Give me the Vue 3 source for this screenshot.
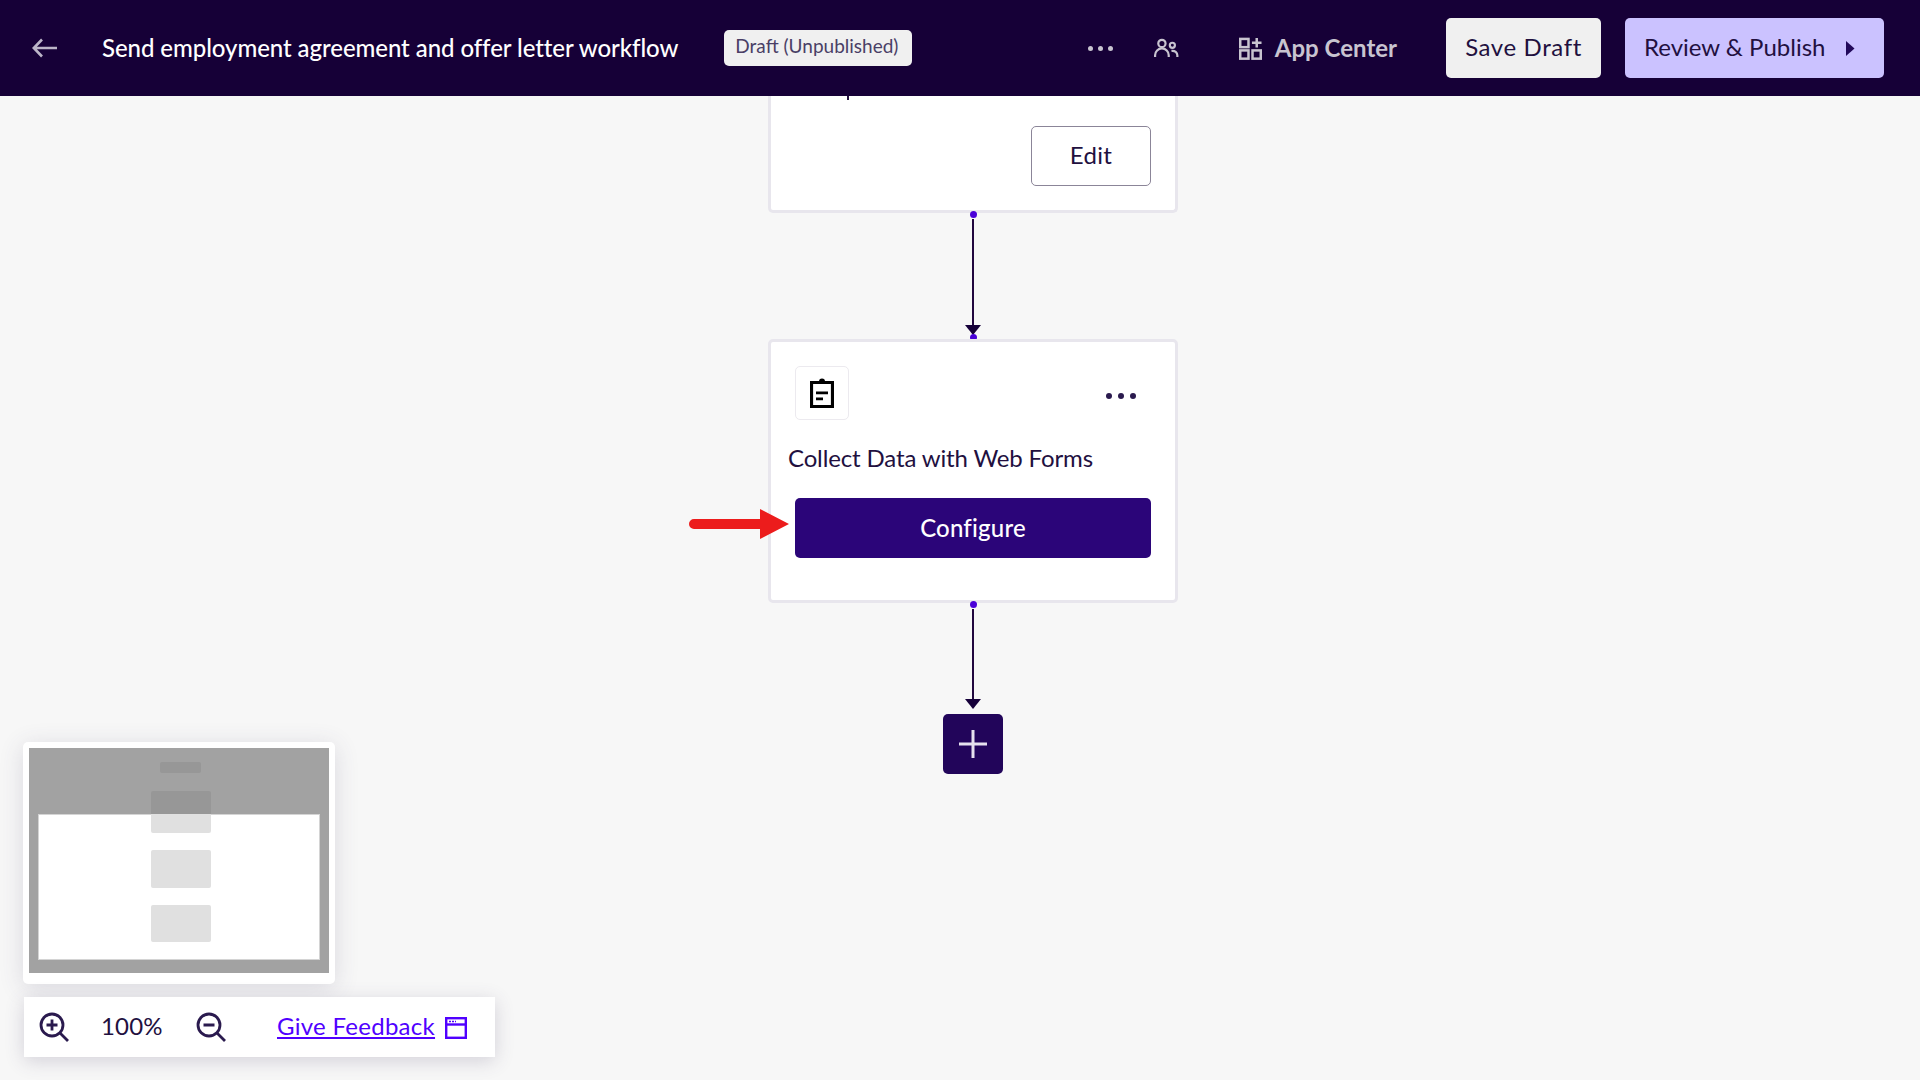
<template>
  <div class="page">
    <!-- top bar -->
    <header class="topbar">
      <button class="back" aria-label="Back">
        <svg width="26" height="20" viewBox="0 0 26 20" fill="none" stroke="#bcb5c8" stroke-width="2.6">
          <path d="M25 10H2M10 1.500L1.800 10L10 18.500" />
        </svg>
      </button>
      <h1 class="title">Send employment agreement and offer letter workflow</h1>
      <span class="badge">Draft (Unpublished)</span>
      <div class="spacer"></div>
      <div class="more-dots"><i></i><i></i><i></i></div>
      <svg class="people" width="26" height="20" viewBox="0 0 28 22" fill="none" stroke="#c8c4d0" stroke-width="2.400">
        <circle cx="9.500" cy="6" r="4" />
        <path d="M2 21v-2a7 7 0 0 1 15 0v2" />
        <circle cx="21" cy="8" r="2.800" />
        <path d="M20 14.200c3.800-.6 6.500 1.800 6.500 5V21" />
      </svg>
      <div class="app-center">
        <svg width="23" height="23" viewBox="0 0 24 24" fill="none" stroke="#c8c4d0" stroke-width="2.600">
          <rect x="1.300" y="2" width="8.600" height="8.600" />
          <rect x="1.300" y="14" width="8.600" height="8.600" />
          <rect x="14.100" y="14" width="8.600" height="8.600" />
          <path d="M18.500 1v10M13.500 6h10" />
        </svg>
        <span class="app-label">App Center</span>
      </div>
      <button class="save">Save Draft</button>
      <button class="publish">
        <span>Review &amp; Publish</span>
        <svg width="9" height="15" viewBox="0 0 9 15"><path d="M0 0l8.500 7.500L0 15z" fill="#22095a" /></svg>
      </button>
    </header>

    <!-- workflow diagram -->
    <main class="canvas">
      <div class="flow">
        <section class="card card-cut">
          <i class="tick"></i>
          <button class="edit">Edit</button>
        </section>

        <div class="link link-first">
          <i class="port port-top"></i>
          <i class="line"></i>
          <i class="head"></i>
          <i class="port port-bottom"></i>
        </div>

        <section class="card card-step">
          <div class="step-top">
            <div class="step-icon">
              <svg width="24" height="30" viewBox="0 0 24 30" fill="none">
                <path d="M1.500 4.500h21v24h-21z" stroke="#000" stroke-width="3.200" />
                <path d="M6 5h12V3.500h-3a3 3 0 0 0-6 0H6z" fill="#000" />
                <path d="M6 14.800h12M6 20.800h7" stroke="#000" stroke-width="2.700" />
              </svg>
            </div>
            <div class="step-dots"><i></i><i></i><i></i></div>
          </div>
          <p class="step-name">Collect Data with Web Forms</p>
          <button class="configure">Configure</button>
          <svg class="red-arrow" width="100" height="30" viewBox="0 0 100 30">
            <path d="M5 10h66V0l29 15-29 15V20H5a5 5 0 0 1 0-10z" fill="#ec1c1c" />
          </svg>
        </section>

        <div class="link link-second">
          <i class="port port-top"></i>
          <i class="line"></i>
          <i class="head"></i>
        </div>

        <button class="add" aria-label="Add step">
          <svg width="28" height="28" viewBox="0 0 28 28" stroke="#e6e1ee" stroke-width="3">
            <path d="M14 0v28M0 14h28" />
          </svg>
        </button>
      </div>

      <!-- minimap and zoom controls -->
      <aside class="minimap">
        <div class="map">
          <div class="map-view"></div>
          <i class="map-node map-label"></i>
          <i class="map-node map-a"></i>
          <i class="map-node map-b"></i>
          <i class="map-node map-c"></i>
        </div>
      </aside>
      <div class="zoombar">
        <svg class="zoom-in" width="30" height="30" viewBox="0 0 30 30" fill="none" stroke="#2a1a4e" stroke-width="2.800">
          <circle cx="13" cy="13" r="11" />
          <path d="M21 21l8 8M7.500 13h11M13 7.500v11" />
        </svg>
        <span class="percent">100%</span>
        <svg class="zoom-out" width="30" height="30" viewBox="0 0 30 30" fill="none" stroke="#2a1a4e" stroke-width="2.800">
          <circle cx="13" cy="13" r="11" />
          <path d="M21 21l8 8M7.500 13h11" />
        </svg>
        <a class="feedback" href="#">Give Feedback</a>
        <svg class="window" width="22" height="22" viewBox="0 0 22 22" fill="none" stroke="#5000ff" stroke-width="2.400">
          <rect x="1.200" y="1.200" width="19.600" height="19.600" />
          <path d="M1 7.500h20" />
          <path d="M4 4.400h7" stroke-width="1.500" stroke-dasharray="2 1" />
        </svg>
      </div>
    </main>
  </div>
</template>

<script setup>
</script>

<style>
html,
body {
  margin: 0;
  background: #f7f7f7;
}
</style>

<style scoped>
.page {
  width: 1920px;
  height: 1080px;
  display: flex;
  flex-direction: column;
  overflow: hidden;
  font-family: Lato, "Liberation Sans", sans-serif;
  color: #22103f;
}

button {
  font-family: inherit;
  cursor: pointer;
}

.topbar {
  height: 96px;
  flex: none;
  display: flex;
  align-items: center;
  background: #160037;
  padding-left: 32px;
  padding-right: 36px;
}

.back {
  display: flex;
  padding: 0;
  background: none;
  border: none;
}

.title {
  margin: 0 0 2px 44px;
  font-size: 24px;
  font-weight: 500;
  letter-spacing: -0.07px;
  color: #fff;
  white-space: nowrap;
}

.badge {
  margin-left: 46px;
  margin-top: -1px;
  box-sizing: border-box;
  width: 188px;
  height: 36px;
  padding-left: 11px;
  line-height: 32px;
  background: #f0f0f0;
  border-radius: 5px;
  color: #4a3f66;
  font-size: 19px;
  white-space: nowrap;
}

.spacer {
  flex: 1;
}

.more-dots {
  display: flex;
  gap: 5px;
}

.more-dots i {
  width: 5px;
  height: 5px;
  border-radius: 50%;
  background: #c8c4d0;
}

.people {
  margin-left: 40px;
}

.app-center {
  display: flex;
  align-items: center;
  gap: 13px;
  margin-left: 60px;
  color: #c8c4d0;
  font-size: 24px;
  font-weight: 700;
}

.app-label {
  margin-bottom: 2px;
}

.save,
.publish {
  height: 60px;
  border: none;
  border-radius: 5px;
  font-size: 24px;
  color: #22103f;
}

.save {
  width: 155px;
  margin-left: 49px;
  padding: 0 0 3px;
  letter-spacing: 0.6px;
  background: #f0f0f0;
}

.publish {
  width: 259px;
  margin-left: 24px;
  padding: 0 29px 0 19px;
  background: #cbc2ff;
  display: flex;
  align-items: center;
  justify-content: space-between;
}

.publish span {
  margin-bottom: 3px;
}

.canvas {
  position: relative;
  flex: 1;
}

.flow {
  width: 410px;
  margin-left: 768px;
  display: flex;
  flex-direction: column;
}

.card {
  box-sizing: border-box;
  position: relative;
  background: #fff;
  border: 3px solid #e8e6ed;
  border-radius: 5px;
}

.card-cut {
  height: 117px;
  border-top: none;
  border-top-left-radius: 0;
  border-top-right-radius: 0;
  display: flex;
  justify-content: flex-end;
  padding: 30px 24px 0 0;
}

.tick {
  position: absolute;
  left: 76px;
  top: 0;
  width: 2px;
  height: 4px;
  background: #22103f;
}

.edit {
  width: 120px;
  height: 60px;
  padding: 0 0 3px;
  background: #fff;
  border: 1px solid #8b8598;
  border-radius: 5px;
  font-size: 24px;
  letter-spacing: 0.3px;
  color: #22103f;
}

.link {
  position: relative;
}

.link-first {
  height: 126px;
}

.link-second {
  height: 111px;
}

.port {
  position: absolute;
  left: 202px;
  width: 7px;
  height: 7px;
  border-radius: 50%;
  background: #4a00d8;
}

.port-top {
  top: -2px;
}

.port-bottom {
  bottom: -2px;
}

.line {
  position: absolute;
  left: 204px;
  top: 6px;
  width: 2px;
  background: #22083f;
}

.link-first .line {
  height: 106px;
}

.link-second .line {
  height: 91px;
}

.head {
  position: absolute;
  left: 197px;
  width: 0;
  height: 0;
  border-left: 8px solid transparent;
  border-right: 8px solid transparent;
  border-top: 10px solid #16003a;
}

.link-first .head {
  top: 112px;
}

.link-second .head {
  top: 96px;
}

.card-step {
  height: 264px;
  padding: 24px 24px 0 24px;
}

.step-top {
  display: flex;
  align-items: center;
  justify-content: space-between;
}

.step-icon {
  box-sizing: border-box;
  width: 54px;
  height: 54px;
  display: flex;
  align-items: center;
  justify-content: center;
  background: #fff;
  border: 1px solid #eceaef;
  border-radius: 5px;
}

.step-dots {
  display: flex;
  gap: 6px;
  margin-right: 15px;
  margin-top: 6px;
}

.step-dots i {
  width: 6px;
  height: 6px;
  border-radius: 50%;
  background: #2a1a4e;
}

.step-name {
  margin: 20px 0 22px -7px;
  font-size: 24px;
  line-height: 36px;
  letter-spacing: -0.14px;
  white-space: nowrap;
}

.configure {
  width: 356px;
  height: 60px;
  display: block;
  padding: 0 0 2px;
  background: #2b0579;
  border: none;
  border-radius: 5px;
  color: #fff;
  font-size: 24px;
  font-weight: 500;
  letter-spacing: 0.2px;
}

.red-arrow {
  position: absolute;
  left: -82px;
  top: 167px;
}

.add {
  width: 60px;
  height: 60px;
  margin-left: 175px;
  display: flex;
  align-items: center;
  justify-content: center;
  padding: 0;
  background: #22055a;
  border: none;
  border-radius: 5px;
}

.minimap {
  position: absolute;
  left: 23px;
  top: 646px;
  box-sizing: border-box;
  width: 312px;
  height: 242px;
  padding: 6px;
  background: #fff;
  border-radius: 5px;
  box-shadow: 0 4px 24px rgba(70, 60, 100, 0.16);
}

.map {
  position: relative;
  height: 225px;
  background: #a2a2a2;
}

.map-view {
  position: absolute;
  left: 9px;
  top: 66px;
  box-sizing: border-box;
  width: 282px;
  height: 146px;
  background: #fff;
  border: 1px solid #d4d4d4;
}

.map-node {
  position: absolute;
  left: 122px;
  width: 60px;
  border-radius: 2px;
}

.map-label {
  left: 131px;
  top: 14px;
  width: 41px;
  height: 11px;
  background: #979797;
}

.map-a {
  top: 43px;
  height: 42px;
  background: linear-gradient(#979797 0 23px, #e0e0e0 23px);
}

.map-b {
  top: 102px;
  height: 38px;
  background: #e0e0e0;
}

.map-c {
  top: 157px;
  height: 37px;
  background: #e0e0e0;
}

.zoombar {
  position: absolute;
  left: 24px;
  top: 901px;
  width: 471px;
  height: 60px;
  display: flex;
  align-items: center;
  background: #fff;
  box-shadow: 0 4px 18px rgba(70, 60, 100, 0.2);
}

.zoom-in {
  margin-left: 15px;
}

.percent {
  margin-left: 32px;
  margin-bottom: 3px;
  width: 61px;
  font-size: 24px;
  letter-spacing: 0.2px;
}

.zoom-out {
  margin-left: 34px;
}

.feedback {
  margin-left: 51px;
  margin-bottom: 3px;
  color: #5000ff;
  font-size: 24px;
  letter-spacing: 0.28px;
  white-space: nowrap;
}

.window {
  margin-left: 10px;
  margin-top: 2px;
}
</style>
